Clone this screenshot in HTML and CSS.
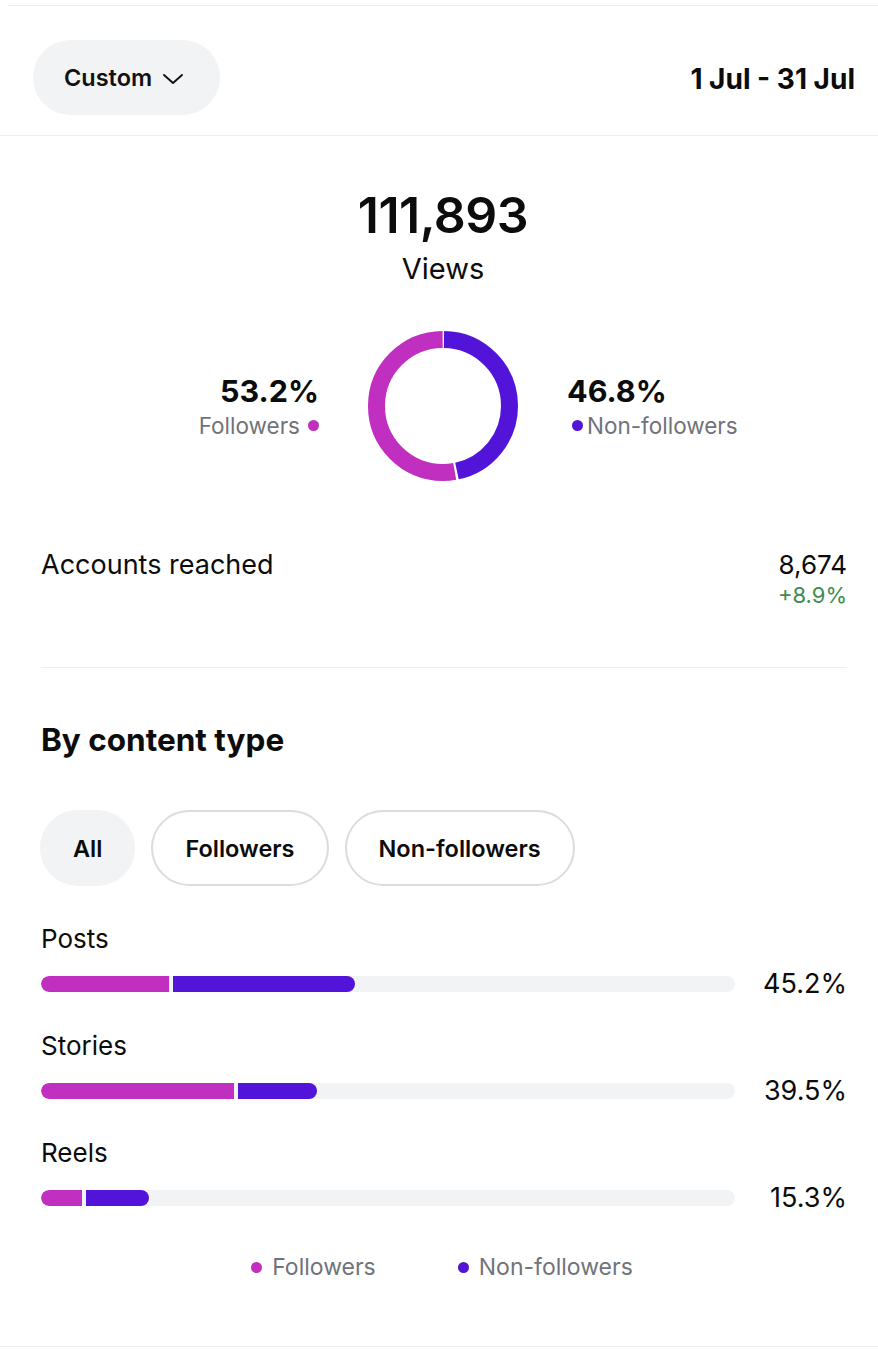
FILE: index.html
```html
<!DOCTYPE html>
<html>
<head>
<meta charset="utf-8">
<link rel="stylesheet" href="styles.css">
</head>
<body>
<div class="page">
  <div class="topline"></div>
  <header class="header">
    <button class="range-btn">Custom
      <svg class="chev" width="22" height="14" viewBox="0 0 22 14"><path d="M2 3 L11 11 L20 3" fill="none" stroke="#111" stroke-width="1.9" stroke-linecap="round" stroke-linejoin="round"/></svg>
    </button>
    <div class="daterange">1 Jul - 31 Jul</div>
  </header>

  <section class="overview">
    <div class="total">111,893</div>
    <div class="total-label">Views</div>

    <div class="donut-row">
      <div class="side side-left">
        <div class="pct">53.2%</div>
        <div class="legend-item">Followers<span class="dot dot-f"></span></div>
      </div>
      <svg class="donut" width="150" height="150" viewBox="0 0 150 150">
        <g transform="rotate(-90 75 75)">
          <circle cx="75" cy="75" r="66.5" fill="none" stroke="#5114d8" stroke-width="17" stroke-dasharray="193.5 300" stroke-dashoffset="-1"/>
          <circle cx="75" cy="75" r="66.5" fill="none" stroke="#c12fc0" stroke-width="17" stroke-dasharray="220 300" stroke-dashoffset="-196.8"/>
        </g>
      </svg>
      <div class="side side-right">
        <div class="pct">46.8%</div>
        <div class="legend-item"><span class="dot dot-n"></span>Non-followers</div>
      </div>
    </div>
  </section>

  <section class="content">
    <div class="reach-row">
      <div class="reach-label">Accounts reached</div>
      <div class="reach-values">
        <div class="reach-num">8,674</div>
        <div class="reach-delta">+8.9%</div>
      </div>
    </div>
    <div class="divider"></div>

    <h2 class="section-title">By content type</h2>

    <div class="chips">
      <span class="chip chip-active">All</span>
      <span class="chip">Followers</span>
      <span class="chip">Non-followers</span>
    </div>

    <div class="bars">
      <div class="bar-item">
        <div class="bar-label">Posts</div>
        <div class="bar-line">
          <div class="track">
            <span class="seg seg-f" style="width:128px"></span>
            <span class="seg seg-n" style="width:182px"></span>
          </div>
          <div class="bar-pct">45.2%</div>
        </div>
      </div>
      <div class="bar-item">
        <div class="bar-label">Stories</div>
        <div class="bar-line">
          <div class="track">
            <span class="seg seg-f" style="width:193px"></span>
            <span class="seg seg-n" style="width:79px"></span>
          </div>
          <div class="bar-pct">39.5%</div>
        </div>
      </div>
      <div class="bar-item">
        <div class="bar-label">Reels</div>
        <div class="bar-line">
          <div class="track">
            <span class="seg seg-f" style="width:41px"></span>
            <span class="seg seg-n" style="width:63px"></span>
          </div>
          <div class="bar-pct">15.3%</div>
        </div>
      </div>
    </div>

    <div class="legend">
      <span class="legend-item"><span class="dot dot-f"></span>Followers</span>
      <span class="legend-item"><span class="dot dot-n"></span>Non-followers</span>
    </div>
  </section>
  <div class="bottomline"></div>
</div>
</body>
</html>
```

FILE: styles.css
```css
* { box-sizing: border-box; }
html, body { margin: 0; padding: 0; background: #fff; }
body {
  font-family: Inter, "Noto Sans", "Liberation Sans", sans-serif;
  color: #0c0c0c;
  width: 878px;
  height: 1352px;
  overflow: hidden;
}
.page { width: 878px; }

.topline {
  margin: 5px 0 0 8px;
  border-top: 1px solid #ebebeb;
}

.header {
  display: flex;
  justify-content: space-between;
  align-items: center;
  padding: 34px 23px 20px 33px;
  border-bottom: 1px solid #efefef;
}
.range-btn {
  display: flex;
  align-items: center;
  gap: 10px;
  height: 75px;
  width: 187px;
  padding: 0 0 0 31px;
  border: none;
  border-radius: 38px;
  background: #f2f3f5;
  font-family: inherit;
  font-size: 23.5px;
  font-weight: 600;
  color: #111;
}
.chev { margin-top: 2px; }
.daterange {
  font-size: 28px;
  font-weight: 700;
  margin-top: 2px;
}

.overview {
  padding-left: 8px;
  display: flex;
  flex-direction: column;
  align-items: center;
}
.total {
  margin-top: 54px;
  font-size: 50px;
  font-weight: 600;
  line-height: 50px;
  letter-spacing: -0.5px;
}
.total-label {
  margin-top: 12px;
  font-size: 29px;
  line-height: 34px;
}
.donut-row {
  display: grid;
  grid-template-columns: 1fr 150px 1fr;
  column-gap: 49px;
  align-items: center;
  width: 870px;
  margin-top: 45px;
}
.donut { display: block; }
.side { display: flex; flex-direction: column; }
.side-left { align-items: flex-end; }
.side-right { align-items: flex-start; }
.pct {
  font-size: 30.5px;
  font-weight: 700;
  line-height: 36px;
}
.side .legend-item { margin-top: 3px; }
.legend-item {
  display: inline-flex;
  align-items: center;
  gap: 6px;
  font-size: 22.5px;
  color: #70737a;
  line-height: 28px;
}
.side-left .legend-item { gap: 8px; }
.side-right .legend-item { gap: 4px; margin-left: 5px; }
.dot {
  display: inline-block;
  width: 11px;
  height: 11px;
  border-radius: 50%;
}
.dot-f { background: #c12fc0; }
.dot-n { background: #5114d8; }

.content {
  padding: 0 31px 0 41px;
}
.reach-row {
  display: flex;
  justify-content: space-between;
  align-items: flex-start;
  margin-top: 68px;
}
.reach-label {
  font-size: 27px;
  line-height: 32px;
}
.reach-values { text-align: right; }
.reach-num { font-size: 26px; line-height: 32px; }
.reach-delta { font-size: 22px; line-height: 28px; color: #3d8c4f; }

.divider {
  margin-top: 58px;
  border-top: 1px solid #efefef;
}
.section-title {
  margin: 52px 0 0;
  font-size: 31.5px;
  font-weight: 700;
  line-height: 40px;
}
.chips {
  display: flex;
  gap: 16px;
  margin-top: 50px;
}
.chip {
  display: inline-flex;
  align-items: center;
  justify-content: center;
  height: 76px;
  padding: 0 32px;
  border: 2px solid #dcdcdc;
  border-radius: 40px;
  font-size: 23.5px;
  font-weight: 600;
}
.chip-active {
  border-color: #f2f3f5;
  background: #f2f3f5;
  padding: 0 31px;
  margin-left: -1px;
}

.bars { margin-top: 38px; }
.bar-item { margin-bottom: 32px; }
.bar-item:last-child { margin-bottom: 0; }
.bar-label { font-size: 26px; line-height: 30px; }
.bar-line {
  display: flex;
  align-items: center;
  justify-content: space-between;
  margin-top: 15px;
}
.track {
  display: flex;
  gap: 4px;
  width: 694px;
  height: 16px;
  border-radius: 8px;
  background: #f2f3f5;
  overflow: hidden;
}
.seg { display: block; height: 100%; }
.seg-f { background: #c12fc0; border-radius: 8px 0 0 8px; }
.seg-n { background: #5114d8; border-radius: 0 8px 8px 0; }
.bar-pct { font-size: 27px; line-height: 30px; }

.legend {
  display: flex;
  justify-content: center;
  gap: 82px;
  margin-top: 40px;
  margin-left: -41px;
  margin-right: -31px;
  padding-left: 6px;
}
.legend .legend-item { gap: 10px; font-size: 23px; }
.bottomline {
  margin-top: 65px;
  border-top: 1px solid #efefef;
}
```
